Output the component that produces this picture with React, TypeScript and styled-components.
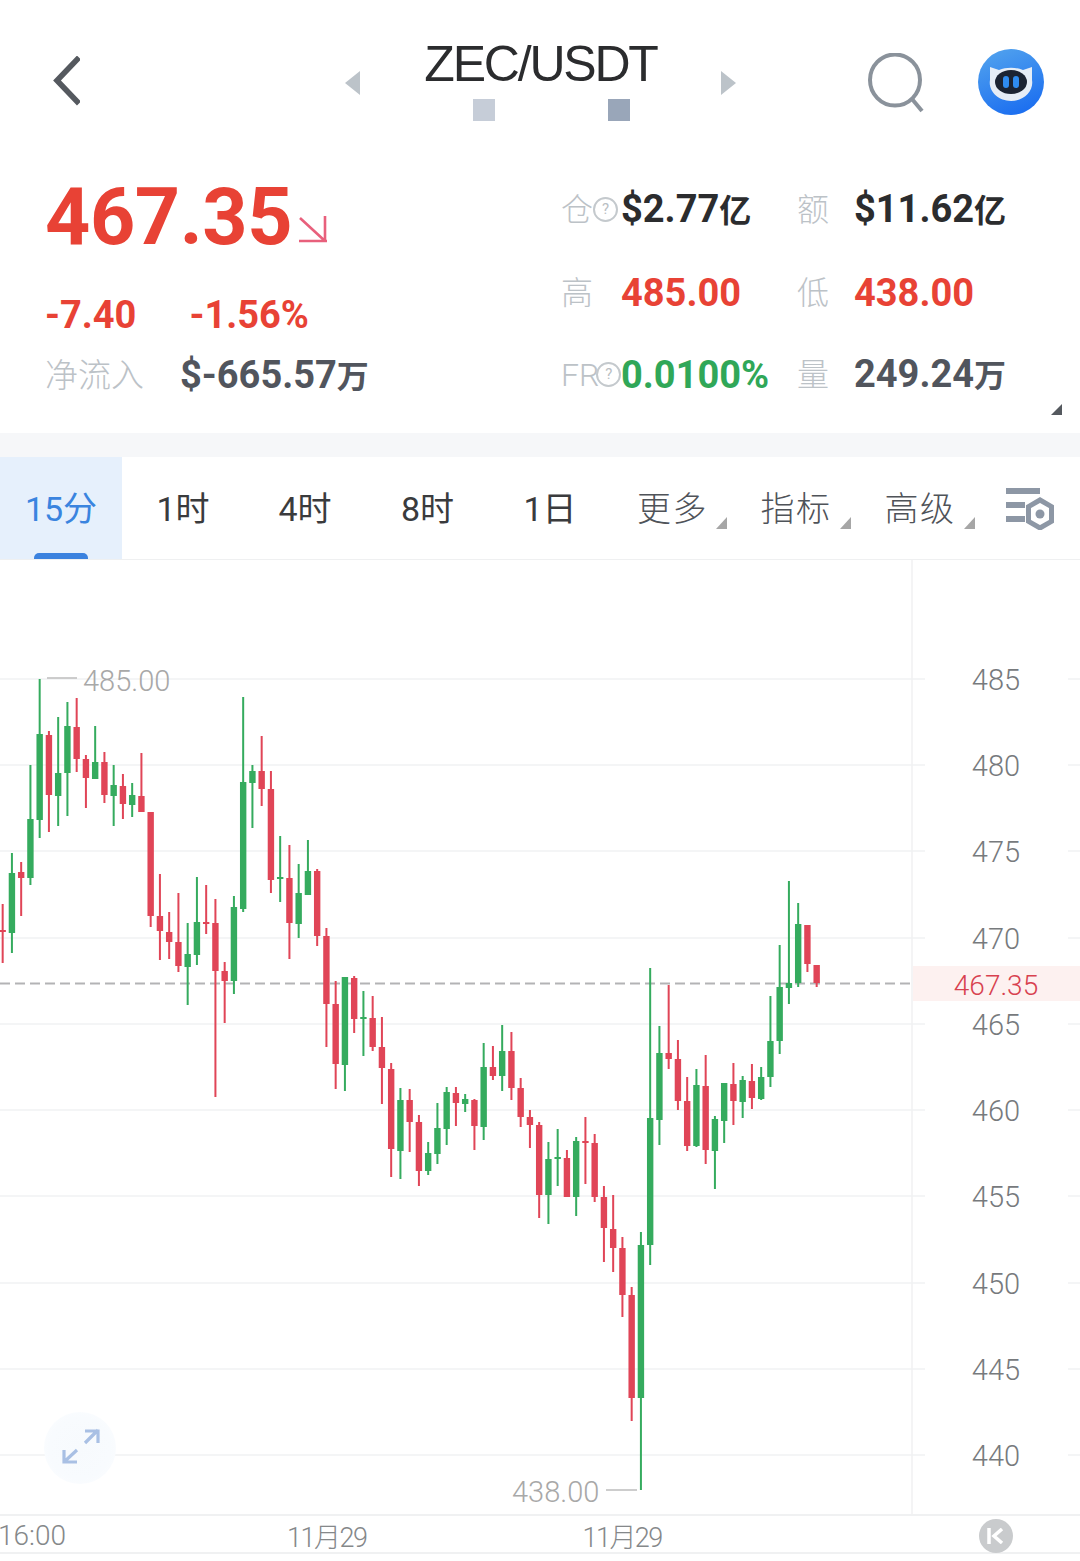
import React from "react";
import styled, { createGlobalStyle } from "styled-components";

const GlobalStyle = createGlobalStyle`
  html, body {
    margin: 0;
    padding: 0;
    background: #fff;
  }
  body {
    font-family: Roboto, "Noto Sans CJK SC", sans-serif;
  }
`;

const RED = "#e84235";
const CANDLE_RED = "#e04557";
const CANDLE_GREEN = "#35ab5e";

type Candle = [number, number, number, number, "r" | "g"];

// wick top, wick bottom, body top, body bottom, colour (page coordinates)
const candles: Candle[] = [
  [904, 963, 930, 932, "r"], [853, 953, 873, 933, "g"], [862, 916, 872, 878, "r"], [765, 885, 819, 878, "g"],
  [679, 838, 734, 820, "g"], [731, 832, 735, 795, "r"], [717, 826, 773, 796, "g"], [702, 816, 726, 773, "g"],
  [698, 772, 727, 759, "r"], [755, 808, 759, 778, "r"], [726, 779, 762, 779, "g"], [752, 803, 762, 795, "r"],
  [765, 826, 785, 796, "g"], [774, 819, 786, 804, "r"], [783, 817, 795, 805, "g"], [753, 812, 796, 812, "r"],
  [812, 927, 812, 916, "r"], [874, 960, 916, 931, "r"], [912, 959, 932, 942, "r"], [893, 972, 942, 966, "r"],
  [923, 1005, 954, 967, "g"], [877, 965, 922, 955, "g"], [885, 934, 922, 924, "r"], [899, 1097, 923, 971, "r"],
  [962, 1023, 971, 981, "r"], [896, 994, 907, 981, "g"], [697, 912, 782, 909, "g"], [765, 828, 771, 783, "g"],
  [736, 806, 771, 789, "r"], [771, 893, 789, 880, "r"], [836, 902, 877, 879, "g"], [845, 959, 878, 923, "r"],
  [864, 938, 893, 924, "g"], [840, 895, 871, 895, "g"], [869, 946, 871, 936, "r"], [928, 1047, 936, 1004, "r"],
  [981, 1089, 1004, 1064, "r"], [977, 1091, 977, 1065, "g"], [976, 1033, 978, 1019, "r"], [991, 1056, 1017, 1019, "g"],
  [996, 1051, 1018, 1047, "r"], [1017, 1104, 1047, 1068, "r"], [1063, 1177, 1069, 1149, "r"], [1088, 1179, 1100, 1151, "g"],
  [1089, 1152, 1100, 1122, "r"], [1115, 1186, 1122, 1171, "r"], [1142, 1175, 1153, 1171, "g"], [1103, 1164, 1128, 1154, "g"],
  [1087, 1145, 1092, 1129, "g"], [1087, 1126, 1093, 1103, "r"], [1094, 1112, 1099, 1104, "g"], [1099, 1150, 1100, 1126, "r"],
  [1043, 1140, 1067, 1127, "g"], [1046, 1080, 1067, 1076, "r"], [1025, 1091, 1051, 1076, "g"], [1032, 1100, 1051, 1088, "r"],
  [1078, 1127, 1088, 1117, "r"], [1110, 1148, 1117, 1125, "r"], [1122, 1218, 1125, 1195, "r"], [1142, 1224, 1159, 1195, "g"],
  [1129, 1186, 1157, 1159, "g"], [1150, 1197, 1158, 1197, "r"], [1137, 1216, 1141, 1197, "g"], [1117, 1184, 1141, 1143, "r"],
  [1134, 1202, 1143, 1197, "r"], [1186, 1262, 1197, 1228, "r"], [1195, 1272, 1229, 1248, "r"], [1237, 1317, 1248, 1295, "r"],
  [1287, 1421, 1295, 1398, "r"], [1232, 1490, 1245, 1398, "g"], [968, 1265, 1118, 1245, "g"], [1026, 1145, 1053, 1120, "g"],
  [985, 1069, 1053, 1059, "r"], [1040, 1110, 1059, 1101, "r"], [1077, 1151, 1101, 1146, "r"], [1069, 1147, 1085, 1146, "g"],
  [1055, 1164, 1086, 1150, "r"], [1116, 1189, 1119, 1151, "g"], [1083, 1143, 1083, 1121, "g"], [1063, 1125, 1084, 1101, "r"],
  [1076, 1118, 1080, 1102, "g"], [1064, 1109, 1081, 1098, "r"], [1067, 1100, 1077, 1099, "g"], [996, 1087, 1041, 1077, "g"],
  [945, 1054, 987, 1041, "g"], [881, 1004, 983, 988, "g"], [903, 987, 924, 983, "g"], [925, 972, 925, 964, "r"],
  [965, 987, 965, 983, "r"],
];

const gridLines = [
  { y: 679, label: "485" },
  { y: 765, label: "480" },
  { y: 851, label: "475" },
  { y: 938, label: "470" },
  { y: 1024, label: "465" },
  { y: 1110, label: "460" },
  { y: 1196, label: "455" },
  { y: 1283, label: "450" },
  { y: 1369, label: "445" },
  { y: 1455, label: "440" },
];

const Page = styled.div`
  width: 1080px;
  height: 1561px;
  overflow: hidden;
  background: #fff;
  position: relative;
`;

const Header = styled.header`
  display: grid;
  grid-template-columns: 345px 391px 344px;
  height: 140px;
`;

const BackCell = styled.div`
  padding: 56px 0 0 53px;
`;

const TitleCell = styled.div`
  display: flex;
  justify-content: space-between;
  align-items: flex-start;
  padding-top: 71px;
`;

const TitleStack = styled.div`
  display: flex;
  flex-direction: column;
  align-items: center;
  margin-top: -35px;
`;

const Title = styled.div`
  font-family: "Liberation Sans", Arial, sans-serif;
  font-size: 50px;
  line-height: 56px;
  letter-spacing: -2.2px;
  color: #2b2c2e;
`;

const PagerDots = styled.div`
  display: flex;
  gap: 113px;
  margin-top: 7px;
  padding-left: 22px;
`;

const PagerDot = styled.span<{ $color: string }>`
  display: block;
  width: 22px;
  height: 22px;
  background: ${(p) => p.$color};
`;

const ActionCell = styled.div`
  display: flex;
  align-items: flex-start;
  padding: 49px 0 0 132px;
  gap: 52px;
`;

const StatsSection = styled.section`
  display: flex;
  height: 293px;
  position: relative;
`;

const PriceColumn = styled.div`
  width: 561px;
  box-sizing: border-box;
  padding: 35px 0 0 45px;
`;

const PriceRow = styled.div`
  display: flex;
  align-items: flex-end;
  gap: 7px;
`;

const BigPrice = styled.div`
  font-size: 79px;
  font-weight: 700;
  line-height: 84px;
  color: ${RED};
  letter-spacing: -0.4px;
`;

const ChangeRow = styled.div`
  display: flex;
  gap: 53px;
  margin-top: 33px;
  font-size: 38px;
  font-weight: 700;
  line-height: 46px;
  color: ${RED};
`;

const FlowRow = styled.div`
  display: flex;
  align-items: center;
  margin-top: 14px;
`;

const FlowLabel = styled.span`
  width: 135px;
  font-size: 33px;
  font-weight: 300;
  line-height: 46px;
  color: #bcc2c7;
`;

const StatGrid = styled.div`
  display: grid;
  grid-template-columns: 60px 176px 57px 1fr;
  grid-auto-rows: 82.5px;
  align-items: center;
  padding-top: 29px;
  flex: 1;
`;

const StatLabel = styled.div`
  display: flex;
  align-items: center;
  font-size: 32px;
  font-weight: 300;
  line-height: 40px;
  color: #bcc2c7;
  white-space: nowrap;
`;

const HelpMark = styled.span<{ $overlap?: boolean }>`
  flex: none;
  width: 21px;
  height: 21px;
  margin-left: ${(p) => (p.$overlap ? -3 : 0)}px;
  margin-top: -2px;
  border: 2px solid #c4c9cd;
  border-radius: 50%;
  font-size: 15px;
  font-weight: 400;
  line-height: 21px;
  text-align: center;
  color: #b9bec3;
`;

const StatValue = styled.div<{ $color: string }>`
  font-size: 38px;
  font-weight: 700;
  line-height: 46px;
  color: ${(p) => p.$color};
  white-space: nowrap;
`;

const Unit = styled.span`
  font-size: 32px;
  font-weight: 700;
`;

const CornerMark = styled.span`
  position: absolute;
  right: 18px;
  bottom: 18px;
  width: 0;
  height: 0;
  border-left: 11px solid transparent;
  border-bottom: 11px solid #55595f;
`;

const SectionGap = styled.div`
  height: 24px;
  background: #f6f7f9;
`;

const TabBar = styled.nav`
  display: flex;
  height: 102px;
  border-bottom: 1px solid #eff0f1;
  box-sizing: content-box;
`;

const Tab = styled.div<{ $active?: boolean; $muted?: boolean; $width: number }>`
  position: relative;
  flex: none;
  width: ${(p) => p.$width}px;
  display: flex;
  align-items: center;
  justify-content: center;
  padding-bottom: 3px;
  box-sizing: border-box;
  font-size: 34px;
  font-weight: ${(p) => (p.$muted ? 300 : 400)};
  color: ${(p) => (p.$active ? "#3a84df" : p.$muted ? "#4f5359" : "#3a3b3d")};
  background: ${(p) => (p.$active ? "#e6f0fc" : "transparent")};
  letter-spacing: ${(p) => (p.$muted ? 1.5 : 0)}px;
`;

const TabUnderline = styled.span`
  position: absolute;
  left: 34px;
  bottom: 0;
  width: 54px;
  height: 6px;
  border-radius: 5px 5px 0 0;
  background: #3b82df;
`;

const TabCaret = styled.span`
  position: absolute;
  right: 7px;
  bottom: 30px;
  width: 0;
  height: 0;
  border-left: 11px solid transparent;
  border-bottom: 12px solid #a6a6a6;
`;

const SettingsCell = styled.div`
  padding: 31px 0 0 24px;
`;

const ChartArea = styled.main`
  position: relative;
  height: 954px;
`;

const ChartSvg = styled.svg`
  display: block;
`;

const AxisText = styled.text`
  font-family: Roboto, sans-serif;
  font-size: 29px;
  font-weight: 300;
  fill: #777a7d;
  text-anchor: middle;
`;

const ExtremeText = styled.text`
  font-family: Roboto, sans-serif;
  font-size: 29px;
  font-weight: 300;
  fill: #a8a8a8;
`;

const CurrentText = styled.text`
  font-family: Roboto, sans-serif;
  font-size: 28px;
  font-weight: 300;
  fill: #d8414f;
  text-anchor: middle;
`;

const ExpandButton = styled.div`
  position: absolute;
  left: 44px;
  top: 852px;
  width: 72px;
  height: 72px;
  border-radius: 50%;
  background: radial-gradient(circle, #f7fafd 0%, #f8fbfe 60%, #fdfeff 100%);
  display: flex;
  align-items: center;
  justify-content: center;
`;

const TimeAxis = styled.footer`
  position: relative;
  display: flex;
  align-items: center;
  height: 40px;
  padding-top: 2px;
  box-sizing: border-box;
  border-top: 2px solid #f0f1f2;
  border-bottom: 2px solid #f0f1f2;
  font-size: 28px;
  font-weight: 300;
  color: #85888a;
`;

const TimeLabel = styled.span<{ $offset: number; $tight?: boolean }>`
  margin-left: ${(p) => p.$offset}px;
  font-size: ${(p) => (p.$tight ? 27 : 28)}px;
  letter-spacing: ${(p) => (p.$tight ? -1.5 : 0)}px;
`;

const RewindButton = styled.span`
  position: absolute;
  left: 979px;
  top: 3px;
  width: 34px;
  height: 34px;
  border-radius: 50%;
  background: #c9cbcd;
  display: flex;
  align-items: center;
  justify-content: center;
`;

const Triangle = ({ dir }: { dir: "left" | "right" }) => (
  <svg width="15" height="24" viewBox="0 0 15 24">
    <path d={dir === "left" ? "M15 0V24L0 12Z" : "M0 0V24L15 12Z"} fill="#bcc3c9" />
  </svg>
);

const RobotLogo = () => (
  <svg width="66" height="66" viewBox="0 0 66 66">
    <defs>
      <linearGradient id="robotBg" x1="0.3" y1="0" x2="0.7" y2="1">
        <stop offset="0" stopColor="#4fa0ee" />
        <stop offset="1" stopColor="#1a6df0" />
      </linearGradient>
    </defs>
    <circle cx="33" cy="33" r="33" fill="url(#robotBg)" />
    <path d="M12 18l9 3c7-3 17-3 24 0l9-3 0 13c2 11-8 21-21 21S10 42 12 31Z" fill="#e6edf6" />
    <ellipse cx="33" cy="33" rx="16" ry="12" fill="#1c2433" />
    <rect x="25" y="27" width="6" height="12" rx="3" fill="#2f8cf0" />
    <rect x="35" y="27" width="6" height="12" rx="3" fill="#2f8cf0" />
  </svg>
);

const tabs = [
  { label: "15分", width: 122, active: true },
  { label: "1时", width: 122 },
  { label: "4时", width: 122 },
  { label: "8时", width: 123 },
  { label: "1日", width: 122 },
  { label: "更多", width: 123, muted: true, caret: true },
  { label: "指标", width: 124, muted: true, caret: true },
  { label: "高级", width: 124, muted: true, caret: true },
];

const App = () => {
  return (
    <Page>
      <GlobalStyle />
      <Header>
        <BackCell>
          <svg width="27" height="50" viewBox="0 0 27 50">
            <path d="M26 1.500 L4 24.500 L26 47.500" fill="none" stroke="#55595f" strokeWidth="5.600" />
          </svg>
        </BackCell>
        <TitleCell>
          <Triangle dir="left" />
          <TitleStack>
            <Title>ZEC/USDT</Title>
            <PagerDots>
              <PagerDot $color="#c6cdd8" />
              <PagerDot $color="#99a6b9" />
            </PagerDots>
          </TitleStack>
          <Triangle dir="right" />
        </TitleCell>
        <ActionCell>
          <svg width="58" height="62" viewBox="0 0 58 62" style={{ marginTop: 4 }}>
            <ellipse cx="27" cy="27" rx="25" ry="25.500" fill="none" stroke="#8a929b" strokeWidth="4" />
            <path d="M44 46 L54 58" stroke="#8a929b" strokeWidth="4" fill="none" />
          </svg>
          <RobotLogo />
        </ActionCell>
      </Header>

      <StatsSection>
        <PriceColumn>
          <PriceRow>
            <BigPrice>467.35</BigPrice>
            <svg width="28" height="28" viewBox="0 0 28 28" style={{ marginBottom: 16 }}>
              <path d="M1 3 L26 26 M26 1 V26.500 M0 26 H28" fill="none" stroke="#e8607c" strokeWidth="2.600" />
            </svg>
          </PriceRow>
          <ChangeRow>
            <span>-7.40</span>
            <span>-1.56%</span>
          </ChangeRow>
          <FlowRow>
            <FlowLabel>净流入</FlowLabel>
            <StatValue $color="#51555d">
              $-665.57<Unit>万</Unit>
            </StatValue>
          </FlowRow>
        </PriceColumn>
        <StatGrid>
          <StatLabel>
            仓<HelpMark>?</HelpMark>
          </StatLabel>
          <StatValue $color="#2b2c2e">
            $2.77<Unit>亿</Unit>
          </StatValue>
          <StatLabel>额</StatLabel>
          <StatValue $color="#2b2c2e">
            $11.62<Unit>亿</Unit>
          </StatValue>
          <StatLabel>高</StatLabel>
          <StatValue $color={RED}>485.00</StatValue>
          <StatLabel>低</StatLabel>
          <StatValue $color={RED}>438.00</StatValue>
          <StatLabel>
            FR<HelpMark $overlap>?</HelpMark>
          </StatLabel>
          <StatValue $color="#30a758">0.0100%</StatValue>
          <StatLabel>量</StatLabel>
          <StatValue $color="#51555d">
            249.24<Unit>万</Unit>
          </StatValue>
        </StatGrid>
        <CornerMark />
      </StatsSection>

      <SectionGap />

      <TabBar>
        {tabs.map((tab) => (
          <Tab key={tab.label} $width={tab.width} $active={tab.active} $muted={tab.muted}>
            {tab.label}
            {tab.active && <TabUnderline />}
            {tab.caret && <TabCaret />}
          </Tab>
        ))}
        <SettingsCell>
          <svg width="50" height="42" viewBox="0 0 50 42">
            <path d="M0 0H34V6H0ZM0 14H19V20H0ZM0 28H19V34H0Z" fill="#8d97a5" />
            <path
              d="M34 12 L45.500 18.700 V33.300 L34 40 L22.500 33.300 V18.700Z"
              fill="none"
              stroke="#8d97a5"
              strokeWidth="5"
            />
            <circle cx="34" cy="26" r="4.500" fill="#8d97a5" />
          </svg>
        </SettingsCell>
      </TabBar>

      <ChartArea>
        <ChartSvg width="1080" height="954" viewBox="0 560 1080 954">
          <rect x="913" y="966" width="167" height="35" fill="#fdf1f0" />
          {gridLines.map((line) => (
            <g key={line.y}>
              <path d={`M0 ${line.y}H925M1068 ${line.y}H1080`} stroke="#f1f2f3" strokeWidth="1.500" />
              <AxisText x="996" y={line.y + 11}>
                {line.label}
              </AxisText>
            </g>
          ))}
          <path d="M912 560V1514" stroke="#f0f1f2" strokeWidth="1.500" />
          <path d="M0 983.500H910" stroke="#b3b3b5" strokeWidth="2" strokeDasharray="10 5" />
          {candles.map(([wickTop, wickBottom, bodyTop, bodyBottom, side], i) => {
            const x = 2.67 + 9.25 * i;
            const color = side === "r" ? CANDLE_RED : CANDLE_GREEN;
            return (
              <g key={i}>
                <rect x={x - 1} y={wickTop} width="2" height={wickBottom - wickTop} fill={color} />
                <rect x={x - 3.2} y={bodyTop} width="6.400" height={bodyBottom - bodyTop} fill={color} />
              </g>
            );
          })}
          <path d="M47 678H77M606 1490H637" stroke="#bdbdbd" strokeWidth="1.500" />
          <ExtremeText x="83" y="691">
            485.00
          </ExtremeText>
          <ExtremeText x="512" y="1502">
            438.00
          </ExtremeText>
          <CurrentText x="996" y="995">
            467.35
          </CurrentText>
        </ChartSvg>
        <ExpandButton>
          <svg width="40" height="40" viewBox="0 0 40 40">
            <path
              d="M25 15 L38 2 M25 3 H38 V15 M17 22 L4 34 M4 22 V34 H17"
              fill="none"
              stroke="#a9c0e4"
              strokeWidth="3.200"
            />
          </svg>
        </ExpandButton>
      </ChartArea>

      <TimeAxis>
        <TimeLabel $offset={-2}>16:00</TimeLabel>
        <TimeLabel $offset={221} $tight>
          11月29
        </TimeLabel>
        <TimeLabel $offset={216} $tight>
          11月29
        </TimeLabel>
        <RewindButton>
          <svg width="18" height="16" viewBox="0 0 18 16">
            <path d="M2 0V16" stroke="#fff" strokeWidth="3.500" />
            <path d="M15 1L7 8L15 15" fill="none" stroke="#fff" strokeWidth="3.500" />
          </svg>
        </RewindButton>
      </TimeAxis>
    </Page>
  );
};

export default App;
